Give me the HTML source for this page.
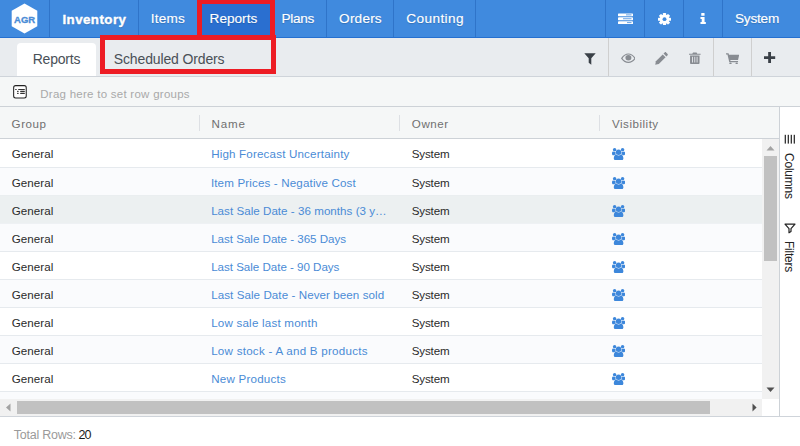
<!DOCTYPE html>
<html><head><meta charset="utf-8"><title>Reports</title>
<style>
*{box-sizing:border-box;margin:0;padding:0}
html,body{width:800px;height:446px;overflow:hidden;background:#fff;font-family:"Liberation Sans",sans-serif;}
.abs{position:absolute}
.tx{position:absolute;white-space:nowrap}
#nav{position:absolute;left:0;top:0;width:800px;height:38px;background:#408ade;border-bottom:1px solid #2570d0}
#nav .sep{position:absolute;top:0;width:1px;height:37px;background:#2f74c9}
#tb{position:absolute;left:0;top:38px;width:800px;height:39px;background:#e9ecef;border-bottom:1px solid #cfd4da}
#tb .sep{position:absolute;top:0;width:1px;height:38px;background:#cfcfcf}
.red{position:absolute;border:5px solid #ed1c24}
#rg{position:absolute;left:0;top:77px;width:800px;height:30px;background:#f5f7f7;border-bottom:1px solid #cdd2d7}
#hd{position:absolute;left:0;top:107px;width:779px;height:32px;background:#f5f7f7;border-bottom:1px solid #cdd2d7}
#hd .hs{position:absolute;top:8px;width:1px;height:16px;background:#dde0e4}
.row{position:absolute;left:0;width:762px;height:28px;background:#fff}
.row.odd{background:#fafbfd}
.row.hov{background:#ecf0f1}
.vi{position:absolute;left:611.9px}
</style></head><body>
<div id="nav">
  <svg class="abs" style="left:11px;top:3px" width="27" height="31" viewBox="0 0 27 31"><polygon points="13.5,0.5 26.3,7.8 26.3,23.2 13.5,30.5 0.7,23.2 0.7,7.8" fill="#fff"/><text x="13.6" y="19.9" text-anchor="middle" font-family="Liberation Sans, sans-serif" font-weight="bold" font-size="9.5" fill="#4a8cd6" stroke="#4a8cd6" stroke-width="0.3">AGR</text></svg>
  <div class="sep" style="left:49px"></div>
  <div class="sep" style="left:138px"></div>
  <div class="abs" style="left:197px;top:0;width:77px;height:37px;background:#2a6fd0"></div>
  <div class="sep" style="left:326px"></div>
  <div class="sep" style="left:393px"></div>
  <div class="sep" style="left:475px"></div>
  <div class="sep" style="left:605px"></div>
  <div class="sep" style="left:644px"></div>
  <div class="sep" style="left:683px"></div>
  <div class="sep" style="left:722px"></div>
  <svg class="abs" style="left:618px;top:12.8px" width="15" height="11.5" viewBox="0 0 15 13" preserveAspectRatio="none"><g fill="#fff"><rect x="0" y="0.5" width="15" height="3.2" rx="0.5"/><rect x="0" y="4.9" width="15" height="3.2" rx="0.5"/><rect x="0" y="9.3" width="15" height="3.2" rx="0.5"/></g><g fill="#408ade"><rect x="8" y="1.7" width="5.5" height="0.9"/><rect x="5" y="6.1" width="8.5" height="0.9"/><rect x="9" y="10.5" width="4.5" height="0.9"/></g></svg>
  <svg class="abs" style="left:658px;top:12.8px" width="13" height="12.4" viewBox="0 0 14 14" preserveAspectRatio="none"><g transform="translate(7 7)"><g fill="#fff"><rect x="-1.7" y="-7" width="3.4" height="14" rx="0.6"/><rect x="-1.7" y="-7" width="3.4" height="14" rx="0.6" transform="rotate(45)"/><rect x="-1.7" y="-7" width="3.4" height="14" rx="0.6" transform="rotate(90)"/><rect x="-1.7" y="-7" width="3.4" height="14" rx="0.6" transform="rotate(135)"/><circle r="5.2"/></g><circle r="2.1" fill="#408ade"/></g></svg>
  <svg class="abs" style="left:700.4px;top:13.2px" width="6.3" height="11.1" viewBox="0 0 8 14" preserveAspectRatio="none"><g fill="#fff"><rect x="1.6" y="0" width="4.2" height="3.6" rx="0.4"/><path d="M0.6 5h5.2v6.2h1.6v2.6h-6.8v-2.6h1.6v-3.6h-1.6z"/></g></svg>
</div>
<div id="tb">
  <div class="abs" style="left:17px;top:5px;width:79px;height:33px;background:#fff;border-radius:4px 4px 0 0"></div>
  <div class="sep" style="left:608px"></div>
  <div class="sep" style="left:713px"></div>
  <div class="sep" style="left:751px"></div>
  <svg class="abs" style="left:584px;top:15px" width="12" height="12" viewBox="0 0 12 12"><path d="M0.3 0.3h11.4l-4.4 5v6.4l-2.6-2v-4.4z" fill="#3a4047"/></svg>
  <svg class="abs" style="left:620.5px;top:15.2px" width="14.8" height="10.4" viewBox="0 0 16 12" preserveAspectRatio="none"><path d="M0.8 6.2C3 2.6 5.4 1.2 8 1.2s5 1.4 7.2 5C13 9.6 10.6 10.8 8 10.8S3 9.6 0.8 6.2z" fill="none" stroke="#888c92" stroke-width="1.3"/><circle cx="8" cy="5.4" r="3.2" fill="#888c92"/></svg>
  <svg class="abs" style="left:655px;top:14px" width="13" height="13" viewBox="0 0 13 13"><g fill="#888c92"><path d="M0.2 12.8l0.7-3.6 6.8-6.8 2.9 2.9-6.8 6.8z"/><path d="M8.5 1.6l1.2-1.2c0.4-0.4 1-0.4 1.4 0l1.5 1.5c0.4 0.4 0.4 1 0 1.4l-1.2 1.2z"/></g></svg>
  <svg class="abs" style="left:689.2px;top:14px" width="11.6" height="12.4" viewBox="0 0 12 13" preserveAspectRatio="none"><g fill="#888c92"><path d="M0 1.8h3.4l0.8-1.4h3.6l0.8 1.4h3.4v1.2h-12z"/><path d="M1.1 3.6h9.8v8c0 0.7-0.5 1.2-1.2 1.2h-7.4c-0.7 0-1.2-0.5-1.2-1.2z"/></g><g fill="#e9ecef"><rect x="3.2" y="5" width="0.9" height="6"/><rect x="5.55" y="5" width="0.9" height="6"/><rect x="7.9" y="5" width="0.9" height="6"/></g></svg>
  <svg class="abs" style="left:725.8px;top:14.6px" width="13.6" height="11.8" viewBox="0 0 14 13" preserveAspectRatio="none"><g fill="#888c92"><path d="M0 0.4h2.6l0.5 1.6h10.5l-1.2 5.6h-8l0.3 1.3h7.7v1.2h-9l-1.9-8.5h-1.5z"/><circle cx="4.6" cy="11.6" r="1.2"/><circle cx="11" cy="11.6" r="1.2"/></g></svg>
  <svg class="abs" style="left:764.4px;top:14px" width="11.2" height="11.2" viewBox="0 0 11 11"><path d="M4.1 0h2.8v4.1h4.1v2.8h-4.1v4.1h-2.8v-4.1h-4.1v-2.8h4.1z" fill="#3a4047"/></svg>
</div>
<div class="red" style="left:197px;top:-1px;width:78px;height:41px"></div>
<div class="red" style="left:100px;top:35px;width:176px;height:39px"></div>
<div id="rg">
  <svg class="abs" style="left:13.1px;top:8.1px" width="13.9" height="13.7" viewBox="0 0 13.9 13.7"><rect x="0.65" y="0.65" width="12.6" height="12.4" rx="2" fill="#fff" stroke="#222" stroke-width="1.05"/><g fill="#333"><rect x="2.1" y="3.9" width="1.7" height="1.05" rx="0.4"/><rect x="5.1" y="3.9" width="6.8" height="1.05" rx="0.4"/><rect x="4" y="5.85" width="1.7" height="1.05" rx="0.4"/><rect x="7.1" y="5.85" width="4.800" height="1.05" rx="0.4"/><rect x="4" y="7.85" width="1.7" height="1.05" rx="0.4"/><rect x="7.1" y="7.85" width="4.800" height="1.05" rx="0.4"/></g></svg>
</div>
<div id="hd">
  <div class="hs" style="left:199px"></div>
  <div class="hs" style="left:399px"></div>
  <div class="hs" style="left:599px"></div>
</div>
<div id="rows">
<div class="row " style="top:139px;"></div><svg class="vi" style="top:147.8px" width="13.2" height="12.2" viewBox="0 0 13.2 12.2"><g fill="#3d87db"><circle cx="2.6" cy="1.8" r="1.75"/><circle cx="10.6" cy="1.8" r="1.75"/><path d="M0 5.3C0 4 0.5 3.500 1.400 3.500C2 4 2.800 4.100 3.600 3.900C3.300 4.700 3.500 5.700 4 6.400C3.200 6.500 2.600 6.800 2.200 7.300H1.200C0.400 7.300 0 6.700 0 5.300z"/><path d="M13.2 5.300C13.200 4 12.700 3.500 11.800 3.500C11.200 4 10.400 4.100 9.600 3.900C9.900 4.700 9.700 5.700 9.200 6.400C10 6.500 10.600 6.800 11 7.300H12C12.800 7.300 13.200 6.700 13.200 5.300z"/><circle cx="6.6" cy="4.300" r="2.750"/><path d="M1.800 10.600C1.800 8.200 2.800 6.600 4.400 6.500C5 7.100 5.800 7.400 6.600 7.400S8.200 7.100 8.800 6.500C10.400 6.600 11.400 8.200 11.400 10.600C11.400 11.600 10.800 12.200 9.800 12.200H3.400C2.400 12.200 1.800 11.600 1.800 10.600z"/></g></svg>
<div class="row odd" style="top:167px;border-top:1px solid #e6eaee;"></div><svg class="vi" style="top:176.8px" width="13.2" height="12.2" viewBox="0 0 13.2 12.2"><g fill="#3d87db"><circle cx="2.6" cy="1.8" r="1.75"/><circle cx="10.6" cy="1.8" r="1.75"/><path d="M0 5.3C0 4 0.5 3.500 1.400 3.500C2 4 2.800 4.100 3.600 3.900C3.300 4.700 3.500 5.700 4 6.400C3.200 6.500 2.600 6.800 2.200 7.300H1.200C0.400 7.300 0 6.700 0 5.300z"/><path d="M13.2 5.300C13.200 4 12.700 3.500 11.800 3.500C11.200 4 10.400 4.100 9.600 3.900C9.900 4.700 9.700 5.700 9.200 6.400C10 6.500 10.600 6.800 11 7.300H12C12.800 7.300 13.200 6.700 13.200 5.300z"/><circle cx="6.6" cy="4.300" r="2.750"/><path d="M1.800 10.600C1.800 8.200 2.800 6.600 4.400 6.500C5 7.100 5.800 7.400 6.600 7.400S8.200 7.100 8.800 6.500C10.400 6.600 11.400 8.200 11.400 10.600C11.400 11.600 10.800 12.200 9.800 12.200H3.400C2.400 12.200 1.800 11.600 1.800 10.600z"/></g></svg>
<div class="row hov" style="top:195px;border-top:1px solid #eaeef0;"></div><svg class="vi" style="top:204.8px" width="13.2" height="12.2" viewBox="0 0 13.2 12.2"><g fill="#3d87db"><circle cx="2.6" cy="1.8" r="1.75"/><circle cx="10.6" cy="1.8" r="1.75"/><path d="M0 5.3C0 4 0.5 3.500 1.400 3.500C2 4 2.800 4.100 3.600 3.900C3.300 4.700 3.500 5.700 4 6.400C3.200 6.500 2.600 6.800 2.200 7.300H1.200C0.400 7.300 0 6.700 0 5.300z"/><path d="M13.2 5.300C13.200 4 12.700 3.500 11.800 3.500C11.200 4 10.400 4.100 9.600 3.900C9.900 4.700 9.700 5.700 9.200 6.400C10 6.500 10.600 6.800 11 7.300H12C12.800 7.300 13.200 6.700 13.200 5.300z"/><circle cx="6.6" cy="4.300" r="2.750"/><path d="M1.800 10.600C1.800 8.200 2.800 6.600 4.400 6.500C5 7.100 5.800 7.400 6.600 7.400S8.200 7.100 8.800 6.500C10.400 6.600 11.400 8.200 11.400 10.600C11.400 11.600 10.800 12.200 9.800 12.200H3.400C2.400 12.200 1.800 11.600 1.800 10.600z"/></g></svg>
<div class="row odd" style="top:223px;border-top:1px solid #eef1f4;"></div><svg class="vi" style="top:232.8px" width="13.2" height="12.2" viewBox="0 0 13.2 12.2"><g fill="#3d87db"><circle cx="2.6" cy="1.8" r="1.75"/><circle cx="10.6" cy="1.8" r="1.75"/><path d="M0 5.3C0 4 0.5 3.500 1.400 3.500C2 4 2.800 4.100 3.600 3.900C3.300 4.700 3.500 5.700 4 6.400C3.200 6.500 2.600 6.800 2.200 7.300H1.200C0.400 7.300 0 6.700 0 5.300z"/><path d="M13.2 5.300C13.200 4 12.700 3.500 11.800 3.500C11.200 4 10.400 4.100 9.600 3.900C9.900 4.700 9.700 5.700 9.200 6.400C10 6.500 10.600 6.800 11 7.300H12C12.800 7.300 13.200 6.700 13.200 5.300z"/><circle cx="6.6" cy="4.300" r="2.750"/><path d="M1.800 10.600C1.800 8.200 2.800 6.600 4.400 6.500C5 7.100 5.800 7.400 6.600 7.400S8.200 7.100 8.800 6.500C10.400 6.600 11.400 8.200 11.400 10.600C11.400 11.600 10.800 12.200 9.800 12.200H3.400C2.400 12.200 1.800 11.600 1.800 10.600z"/></g></svg>
<div class="row " style="top:251px;border-top:1px solid #e6eaee;"></div><svg class="vi" style="top:260.8px" width="13.2" height="12.2" viewBox="0 0 13.2 12.2"><g fill="#3d87db"><circle cx="2.6" cy="1.8" r="1.75"/><circle cx="10.6" cy="1.8" r="1.75"/><path d="M0 5.3C0 4 0.5 3.500 1.400 3.500C2 4 2.800 4.100 3.600 3.900C3.300 4.700 3.500 5.700 4 6.400C3.200 6.500 2.600 6.800 2.200 7.300H1.200C0.400 7.300 0 6.700 0 5.300z"/><path d="M13.2 5.300C13.200 4 12.700 3.500 11.800 3.500C11.200 4 10.400 4.100 9.600 3.900C9.900 4.700 9.700 5.700 9.200 6.400C10 6.500 10.600 6.800 11 7.300H12C12.800 7.300 13.200 6.700 13.200 5.300z"/><circle cx="6.6" cy="4.300" r="2.750"/><path d="M1.800 10.600C1.800 8.200 2.800 6.600 4.400 6.500C5 7.100 5.800 7.400 6.600 7.400S8.200 7.100 8.800 6.500C10.400 6.600 11.400 8.200 11.400 10.600C11.400 11.600 10.800 12.200 9.800 12.200H3.400C2.400 12.200 1.800 11.600 1.800 10.600z"/></g></svg>
<div class="row odd" style="top:279px;border-top:1px solid #e6eaee;"></div><svg class="vi" style="top:288.8px" width="13.2" height="12.2" viewBox="0 0 13.2 12.2"><g fill="#3d87db"><circle cx="2.6" cy="1.8" r="1.75"/><circle cx="10.6" cy="1.8" r="1.75"/><path d="M0 5.3C0 4 0.5 3.500 1.400 3.500C2 4 2.800 4.100 3.600 3.900C3.300 4.700 3.500 5.700 4 6.400C3.200 6.500 2.600 6.800 2.200 7.300H1.200C0.400 7.300 0 6.700 0 5.300z"/><path d="M13.2 5.300C13.200 4 12.700 3.500 11.800 3.500C11.200 4 10.400 4.100 9.600 3.900C9.900 4.700 9.700 5.700 9.200 6.400C10 6.500 10.600 6.800 11 7.300H12C12.800 7.300 13.200 6.700 13.200 5.300z"/><circle cx="6.6" cy="4.300" r="2.750"/><path d="M1.800 10.600C1.800 8.200 2.800 6.600 4.400 6.500C5 7.100 5.800 7.400 6.600 7.400S8.200 7.100 8.800 6.500C10.400 6.600 11.400 8.200 11.400 10.600C11.400 11.600 10.800 12.200 9.800 12.200H3.400C2.400 12.200 1.800 11.600 1.800 10.600z"/></g></svg>
<div class="row " style="top:307px;border-top:1px solid #e6eaee;"></div><svg class="vi" style="top:316.8px" width="13.2" height="12.2" viewBox="0 0 13.2 12.2"><g fill="#3d87db"><circle cx="2.6" cy="1.8" r="1.75"/><circle cx="10.6" cy="1.8" r="1.75"/><path d="M0 5.3C0 4 0.5 3.500 1.400 3.500C2 4 2.800 4.100 3.600 3.900C3.300 4.700 3.500 5.700 4 6.400C3.200 6.500 2.600 6.800 2.200 7.300H1.200C0.400 7.300 0 6.700 0 5.300z"/><path d="M13.2 5.300C13.200 4 12.700 3.500 11.800 3.500C11.200 4 10.400 4.100 9.600 3.900C9.900 4.700 9.700 5.700 9.200 6.400C10 6.500 10.600 6.800 11 7.300H12C12.800 7.300 13.200 6.700 13.200 5.300z"/><circle cx="6.6" cy="4.300" r="2.750"/><path d="M1.800 10.600C1.800 8.200 2.800 6.600 4.400 6.500C5 7.100 5.800 7.400 6.600 7.400S8.200 7.100 8.800 6.500C10.400 6.600 11.400 8.200 11.400 10.600C11.400 11.600 10.800 12.200 9.800 12.200H3.400C2.400 12.200 1.800 11.600 1.800 10.600z"/></g></svg>
<div class="row odd" style="top:335px;border-top:1px solid #e6eaee;"></div><svg class="vi" style="top:344.8px" width="13.2" height="12.2" viewBox="0 0 13.2 12.2"><g fill="#3d87db"><circle cx="2.6" cy="1.8" r="1.75"/><circle cx="10.6" cy="1.8" r="1.75"/><path d="M0 5.3C0 4 0.5 3.500 1.400 3.500C2 4 2.800 4.100 3.600 3.900C3.300 4.700 3.500 5.700 4 6.400C3.200 6.500 2.600 6.800 2.200 7.300H1.200C0.400 7.300 0 6.700 0 5.300z"/><path d="M13.2 5.300C13.200 4 12.700 3.500 11.800 3.500C11.200 4 10.400 4.100 9.600 3.900C9.900 4.700 9.700 5.700 9.200 6.400C10 6.500 10.600 6.800 11 7.300H12C12.800 7.300 13.200 6.700 13.200 5.300z"/><circle cx="6.6" cy="4.300" r="2.750"/><path d="M1.800 10.600C1.800 8.200 2.800 6.600 4.400 6.500C5 7.100 5.800 7.400 6.600 7.400S8.200 7.100 8.800 6.500C10.400 6.600 11.400 8.200 11.400 10.600C11.400 11.600 10.800 12.200 9.800 12.200H3.400C2.400 12.200 1.800 11.600 1.800 10.600z"/></g></svg>
<div class="row " style="top:363px;border-top:1px solid #e6eaee;"></div><svg class="vi" style="top:372.8px" width="13.2" height="12.2" viewBox="0 0 13.2 12.2"><g fill="#3d87db"><circle cx="2.6" cy="1.8" r="1.75"/><circle cx="10.6" cy="1.8" r="1.75"/><path d="M0 5.3C0 4 0.5 3.500 1.400 3.500C2 4 2.800 4.100 3.600 3.900C3.300 4.700 3.500 5.700 4 6.400C3.200 6.500 2.600 6.800 2.200 7.300H1.200C0.400 7.300 0 6.700 0 5.300z"/><path d="M13.2 5.300C13.200 4 12.700 3.500 11.800 3.500C11.200 4 10.400 4.100 9.600 3.900C9.900 4.700 9.700 5.700 9.200 6.400C10 6.500 10.600 6.800 11 7.300H12C12.800 7.300 13.200 6.700 13.200 5.300z"/><circle cx="6.6" cy="4.300" r="2.750"/><path d="M1.800 10.600C1.800 8.200 2.800 6.600 4.400 6.500C5 7.100 5.800 7.400 6.600 7.400S8.200 7.100 8.800 6.500C10.400 6.600 11.400 8.200 11.400 10.600C11.400 11.600 10.800 12.200 9.800 12.200H3.400C2.400 12.200 1.800 11.600 1.800 10.600z"/></g></svg>
<div class="row odd" style="top:391px;height:8px;border-top:1px solid #e6eaee"></div>
</div>
<div class="abs" style="left:779px;top:107px;width:21px;height:309px;background:#fff;border-left:1px solid #cdd2d7"></div>
<svg class="abs" style="left:784px;top:134px" width="12" height="10" viewBox="0 0 12 10"><g fill="#222"><rect x="0.7" y="0.8" width="1.2" height="8.800"/><rect x="3.7" y="0.8" width="1.2" height="8.800"/><rect x="6.7" y="0.8" width="1.2" height="8.800"/><rect x="9.7" y="0.8" width="1.2" height="8.800"/></g></svg>
<div class="abs" id="sc" style="left:781.4px;top:153px;width:16px;font-size:12px;letter-spacing:-0.22px;color:#222;writing-mode:vertical-rl;white-space:nowrap;line-height:16px">Columns</div>
<svg class="abs" style="left:784px;top:223px" width="12" height="11" viewBox="0 0 12 11"><path d="M1 1.2h10l-4 4.4v3l-2 1.2v-4.2z" fill="none" stroke="#222" stroke-width="1.2" stroke-linejoin="round"/></svg>
<div class="abs" id="sf" style="left:781.4px;top:241px;width:16px;font-size:12px;letter-spacing:-0.25px;color:#222;writing-mode:vertical-rl;white-space:nowrap;line-height:16px">Filters</div>
<div class="abs" style="left:762px;top:139px;width:17px;height:260px;background:#f1f1f1"></div>
<div class="abs" style="left:764px;top:156px;width:13px;height:105px;background:#c1c1c1"></div>
<svg class="abs" style="left:766px;top:145px" width="9" height="6" viewBox="0 0 9 6"><path d="M0.5 5.5L4.5 1l4 4.500z" fill="#a3a3a3"/></svg>
<svg class="abs" style="left:766px;top:387px" width="9" height="6" viewBox="0 0 9 6"><path d="M0.5 0.5h8L4.5 5z" fill="#505050"/></svg>
<div class="abs" style="left:0;top:399px;width:762px;height:17px;background:#f1f1f1"></div>
<div class="abs" style="left:17px;top:401px;width:693px;height:13px;background:#c1c1c1"></div>
<svg class="abs" style="left:5px;top:403px" width="6" height="9" viewBox="0 0 6 9"><path d="M5.5 0.5v8L1 4.500z" fill="#a3a3a3"/></svg>
<svg class="abs" style="left:751.6px;top:403px" width="6" height="9" viewBox="0 0 6 9"><path d="M0.5 0.5v8L4.6 4.500z" fill="#505050"/></svg>
<div class="abs" style="left:0;top:416px;width:800px;height:1px;background:#cfd4da"></div>
<div class="tx" id="n1" style="left:62.48px;top:11.6px;line-height:16px;letter-spacing:0.448px;font-size:13.3px;color:#fff;font-weight:bold;-webkit-text-stroke:0.4px #fff;text-shadow:0 1px 1px rgba(0,0,0,.2);">Inventory</div>
<div class="tx" id="n2" style="left:150.80px;top:10.7px;line-height:16px;letter-spacing:0.210px;font-size:13.6px;color:#fff;text-shadow:0 1px 1px rgba(0,0,0,.18);-webkit-text-stroke:0.15px #fff;">Items</div>
<div class="tx" id="n3" style="left:209.62px;top:10.7px;line-height:16px;letter-spacing:0.003px;font-size:13.6px;color:#fff;text-shadow:0 1px 1px rgba(0,0,0,.18);-webkit-text-stroke:0.15px #fff;">Reports</div>
<div class="tx" id="n4" style="left:281.62px;top:10.7px;line-height:16px;letter-spacing:-0.360px;font-size:13.6px;color:#fff;text-shadow:0 1px 1px rgba(0,0,0,.18);-webkit-text-stroke:0.15px #fff;">Plans</div>
<div class="tx" id="n5" style="left:339.11px;top:10.7px;line-height:16px;letter-spacing:0.202px;font-size:13.6px;color:#fff;text-shadow:0 1px 1px rgba(0,0,0,.18);-webkit-text-stroke:0.15px #fff;">Orders</div>
<div class="tx" id="n6" style="left:406.22px;top:10.7px;line-height:16px;letter-spacing:0.421px;font-size:13.6px;color:#fff;text-shadow:0 1px 1px rgba(0,0,0,.18);-webkit-text-stroke:0.15px #fff;">Counting</div>
<div class="tx" id="n7" style="left:735.04px;top:10.7px;line-height:16px;letter-spacing:-0.224px;font-size:13.6px;color:#fff;text-shadow:0 1px 1px rgba(0,0,0,.18);-webkit-text-stroke:0.15px #fff;">System</div>
<div class="tx" id="b1" style="left:32.65px;top:51px;line-height:16px;letter-spacing:-0.192px;font-size:14px;color:#495057;">Reports</div>
<div class="tx" id="b2" style="left:113.75px;top:51px;line-height:16px;letter-spacing:-0.133px;font-size:14px;color:#495057;">Scheduled Orders</div>
<div class="tx" id="rgt" style="left:40.30px;top:87.3px;line-height:14px;letter-spacing:0.260px;font-size:11.5px;color:#a9a9a9;">Drag here to set row groups</div>
<div class="tx" id="h1" style="left:11.60px;top:117px;line-height:14px;letter-spacing:0.538px;font-size:11.6px;color:#707070;">Group</div>
<div class="tx" id="h2" style="left:211.50px;top:117px;line-height:14px;letter-spacing:0.833px;font-size:11.6px;color:#707070;">Name</div>
<div class="tx" id="h3" style="left:411.85px;top:117px;line-height:14px;letter-spacing:0.537px;font-size:11.6px;color:#707070;">Owner</div>
<div class="tx" id="h4" style="left:612.00px;top:117px;line-height:14px;letter-spacing:0.500px;font-size:11.6px;color:#707070;">Visibility</div>
<div class="tx" id="g0" style="left:11.70px;top:147.2px;line-height:14px;letter-spacing:0.050px;font-size:11.6px;color:#2a2a2a;">General</div>
<div class="tx" id="m0" style="left:211.15px;top:147.2px;line-height:14px;letter-spacing:0.173px;font-size:11.6px;color:#4a8bd6;">High Forecast Uncertainty</div>
<div class="tx" id="o0" style="left:411.70px;top:147.2px;line-height:14px;letter-spacing:-0.140px;font-size:11.6px;color:#2a2a2a;">System</div>
<div class="tx" id="g1" style="left:11.70px;top:176.2px;line-height:14px;letter-spacing:0.050px;font-size:11.6px;color:#2a2a2a;">General</div>
<div class="tx" id="m1" style="left:210.90px;top:176.2px;line-height:14px;letter-spacing:0.146px;font-size:11.6px;color:#4a8bd6;">Item Prices - Negative Cost</div>
<div class="tx" id="o1" style="left:411.70px;top:176.2px;line-height:14px;letter-spacing:-0.140px;font-size:11.6px;color:#2a2a2a;">System</div>
<div class="tx" id="g2" style="left:11.70px;top:204.2px;line-height:14px;letter-spacing:0.050px;font-size:11.6px;color:#2a2a2a;">General</div>
<div class="tx" id="m2" style="left:211.15px;top:204.2px;line-height:14px;letter-spacing:0.029px;font-size:11.6px;color:#4a8bd6;">Last Sale Date - 36 months (3 y…</div>
<div class="tx" id="o2" style="left:411.70px;top:204.2px;line-height:14px;letter-spacing:-0.140px;font-size:11.6px;color:#2a2a2a;">System</div>
<div class="tx" id="g3" style="left:11.70px;top:232.2px;line-height:14px;letter-spacing:0.050px;font-size:11.6px;color:#2a2a2a;">General</div>
<div class="tx" id="m3" style="left:211.15px;top:232.2px;line-height:14px;letter-spacing:-0.015px;font-size:11.6px;color:#4a8bd6;">Last Sale Date - 365 Days</div>
<div class="tx" id="o3" style="left:411.70px;top:232.2px;line-height:14px;letter-spacing:-0.140px;font-size:11.6px;color:#2a2a2a;">System</div>
<div class="tx" id="g4" style="left:11.70px;top:260.2px;line-height:14px;letter-spacing:0.050px;font-size:11.6px;color:#2a2a2a;">General</div>
<div class="tx" id="m4" style="left:211.15px;top:260.2px;line-height:14px;letter-spacing:-0.028px;font-size:11.6px;color:#4a8bd6;">Last Sale Date - 90 Days</div>
<div class="tx" id="o4" style="left:411.70px;top:260.2px;line-height:14px;letter-spacing:-0.140px;font-size:11.6px;color:#2a2a2a;">System</div>
<div class="tx" id="g5" style="left:11.70px;top:288.2px;line-height:14px;letter-spacing:0.050px;font-size:11.6px;color:#2a2a2a;">General</div>
<div class="tx" id="m5" style="left:211.15px;top:288.2px;line-height:14px;letter-spacing:0.071px;font-size:11.6px;color:#4a8bd6;">Last Sale Date - Never been sold</div>
<div class="tx" id="o5" style="left:411.70px;top:288.2px;line-height:14px;letter-spacing:-0.140px;font-size:11.6px;color:#2a2a2a;">System</div>
<div class="tx" id="g6" style="left:11.70px;top:316.2px;line-height:14px;letter-spacing:0.050px;font-size:11.6px;color:#2a2a2a;">General</div>
<div class="tx" id="m6" style="left:211.15px;top:316.2px;line-height:14px;letter-spacing:0.208px;font-size:11.6px;color:#4a8bd6;">Low sale last month</div>
<div class="tx" id="o6" style="left:411.70px;top:316.2px;line-height:14px;letter-spacing:-0.140px;font-size:11.6px;color:#2a2a2a;">System</div>
<div class="tx" id="g7" style="left:11.70px;top:344.2px;line-height:14px;letter-spacing:0.050px;font-size:11.6px;color:#2a2a2a;">General</div>
<div class="tx" id="m7" style="left:211.15px;top:344.2px;line-height:14px;letter-spacing:0.254px;font-size:11.6px;color:#4a8bd6;">Low stock - A and B products</div>
<div class="tx" id="o7" style="left:411.70px;top:344.2px;line-height:14px;letter-spacing:-0.140px;font-size:11.6px;color:#2a2a2a;">System</div>
<div class="tx" id="g8" style="left:11.70px;top:372.2px;line-height:14px;letter-spacing:0.050px;font-size:11.6px;color:#2a2a2a;">General</div>
<div class="tx" id="m8" style="left:211.15px;top:372.2px;line-height:14px;letter-spacing:0.223px;font-size:11.6px;color:#4a8bd6;">New Products</div>
<div class="tx" id="o8" style="left:411.70px;top:372.2px;line-height:14px;letter-spacing:-0.140px;font-size:11.6px;color:#2a2a2a;">System</div>
<div class="tx" id="tr1" style="left:13.68px;top:427px;line-height:16px;letter-spacing:-0.218px;font-size:12.5px;color:#9a9a9a;">Total Rows:</div>
<div class="tx" id="tr2" style="left:78.40px;top:427px;line-height:16px;letter-spacing:-0.780px;font-size:12.5px;color:#1a1a1a;">20</div>
</body></html>
